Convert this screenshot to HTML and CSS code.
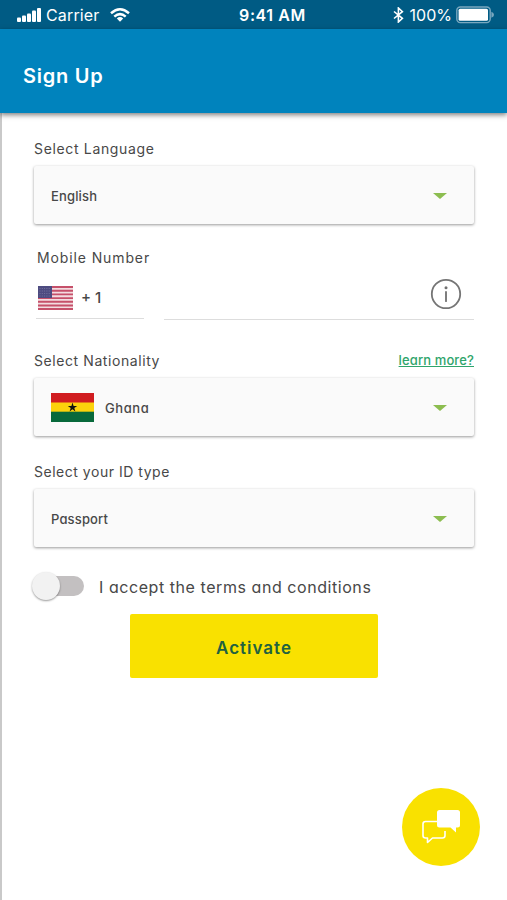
FILE: index.html
```html
<!DOCTYPE html>
<html lang="en">
<head>
<meta charset="utf-8">
<title>Sign Up</title>
<link rel="stylesheet" href="styles.css">
</head>
<body>
<div class="status">
  <div class="status-side">
    <svg class="signal" width="25" height="16" viewBox="0 0 25 16" fill="#fff"><rect x="0" y="10.5" width="4" height="4.5" rx="1"/><rect x="5" y="8.5" width="4" height="6.5" rx="1"/><rect x="10" y="6.5" width="4" height="8.5" rx="1"/><rect x="15" y="3.5" width="4" height="11.5" rx="1"/><rect x="20" y="1" width="4" height="14" rx="1"/></svg>
    <span class="carrier">Carrier</span>
    <svg class="wifi" width="20" height="14" viewBox="0 0 20 14" fill="none" stroke="#fff" stroke-width="2.5"><path d="M1 5.2Q10-2.6 19 5.2M4.3 8.6Q10 3.6 15.7 8.6"/><path d="M6.8 10.4Q10 7.8 13.2 10.4L10 13.7Z" fill="#fff" stroke="none"/></svg>
  </div>
  <span class="clock">9:41 AM</span>
  <div class="status-side status-end">
    <svg class="bluetooth" width="11" height="16" viewBox="0 0 11 16" fill="none" stroke="#fff" stroke-width="1.6"><path d="M1 4.5L9.4 11.4L5.4 15V1L9.4 4.6L1 11.5"/></svg>
    <span class="percent">100%</span>
    <svg class="battery" width="38" height="18" viewBox="0 0 38 18"><rect x=".8" y="1" width="33.4" height="15.6" rx="3.5" fill="none" stroke="#79a8bf" stroke-width="1.4"/><rect x="2.6" y="2.8" width="29.4" height="12" rx="1.5" fill="#fff"/><path d="M35.4 5.8Q38 7 38 8.8T35.4 11.8Z" fill="#79a8bf"/></svg>
  </div>
</div>
<header class="header"><h1 class="title">Sign Up</h1></header>
<main class="page">
  <section class="field">
    <div class="label-row"><span class="label label-language">Select Language</span></div>
    <div class="select"><span class="value english">English</span><i class="caret"></i></div>
  </section>
  <section class="field field-phone">
    <div class="label-row"><span class="label label-mobile">Mobile Number</span></div>
    <div class="phone">
      <div class="code">
        <svg width="35" height="24" viewBox="0 0 35 24"><rect width="35" height="24" fill="#f3dce0"/><path d="M0 1H35M0 4.7H35M0 8.4H35M0 12.1H35M0 15.8H35M0 19.5H35M0 23H35" stroke="#c6506a" stroke-width="1.9"/><rect width="14" height="12" fill="#4d4b80"/><path d="M1.5 2.5H13M1.5 5H13M1.5 7.5H13M1.5 10H13" stroke="#8583ab" stroke-width=".7" stroke-dasharray="1 1.3"/></svg>
        <span class="dial">+ 1</span>
      </div>
      <div class="number">
        <svg width="32" height="32" viewBox="0 0 32 32"><circle cx="16" cy="16" r="14.2" fill="none" stroke="#757575" stroke-width="1.8"/><circle cx="16" cy="9.7" r="1.5" fill="#707070"/><path d="M16 14V23.2" stroke="#707070" stroke-width="1.8" stroke-linecap="round"/></svg>
      </div>
    </div>
  </section>
  <section class="field field-nation">
    <div class="label-row"><span class="label label-nation">Select Nationality</span><a class="more">learn more?</a></div>
    <div class="select">
      <svg class="ghana-flag" width="43" height="29" viewBox="0 0 43 29"><rect width="43" height="10" fill="#d01c20"/><rect y="9.5" width="43" height="9.5" fill="#fcd20c"/><rect y="18.7" width="43" height="10.3" fill="#08693b"/><path d="M21.5 9.5L22.6 12.9H26.2L23.3 15L24.4 18.4L21.5 16.3L18.6 18.4L19.7 15L16.8 12.9H20.4Z" fill="#111"/></svg>
      <span class="value ghana">Ghana</span><i class="caret"></i>
    </div>
  </section>
  <section class="field">
    <div class="label-row"><span class="label label-id">Select your ID type</span></div>
    <div class="select"><span class="value passport">Passport</span><i class="caret"></i></div>
  </section>
  <div class="terms"><span class="toggle"><i class="knob"></i></span><span class="terms-text">I accept the terms and conditions</span></div>
  <button class="activate">Activate</button>
  <div class="chat">
    <svg width="40" height="36" viewBox="0 0 40 36"><path d="M16 12.5H4.5Q2 12.5 2 15V26.5Q2 29 4.5 29H6.5V33.5L11.5 29H21.5Q24 29 24 26.5V22" fill="none" stroke="#fff" stroke-width="1.6" stroke-linejoin="round"/><path d="M18.5 1H36.5Q39 1 39 3.5V16Q39 18.5 36.5 18.5H35V23.5L29.5 18.5H18.5Q16 18.5 16 16V3.5Q16 1 18.5 1Z" fill="#fff"/></svg>
  </div>
</main>
</body>
</html>
```
FILE: styles.css
```css
* { box-sizing: border-box; }
body {
  margin: 0;
  height: 900px;
  display: flex;
  flex-direction: column;
  overflow: hidden;
  background: #fff;
  color: #484848;
  font-family: Inter, "Liberation Sans", sans-serif;
  white-space: nowrap;
}
svg { display: block; flex: none; }
.status {
  height: 29px;
  flex: none;
  display: grid;
  grid-template-columns: 1fr auto 1fr;
  align-items: center;
  padding: 0 13px 0 17px;
  background: #005b84;
  color: #fff;
}
.status-side { display: flex; align-items: center; }
.status-end { justify-content: flex-end; }
.carrier { margin-left: 4px; width: 54px; font-size: 16px; letter-spacing: .15px; }
.wifi { margin-left: 10px; }
.clock { margin-left: 34px; font-size: 16px; font-weight: 600; letter-spacing: .6px; }
.percent { margin: 0 4px 0 6px; font-size: 16px; }
.header {
  height: 84px;
  flex: none;
  display: flex;
  align-items: center;
  padding: 9px 23px 0;
  background: #0083bd;
  box-shadow: 0 2px 5px rgba(0, 0, 0, .5);
  z-index: 1;
}
.title { margin: 0; color: #fff; font-size: 20px; font-weight: 600; letter-spacing: .75px; }
.page {
  flex: 1;
  display: flex;
  flex-direction: column;
  padding: 25px 33px 0 32px;
  border-left: 2px solid #c9c9c9;
}
.field { margin-bottom: 22px; }
.label-row {
  display: flex;
  align-items: center;
  justify-content: space-between;
  height: 20px;
  margin-bottom: 8px;
}
.label { font-size: 14px; font-weight: 400; letter-spacing: .66px; }
.label-mobile { letter-spacing: .88px; }
.label-nation { letter-spacing: .58px; }
.label-id { letter-spacing: .52px; }
.select {
  display: flex;
  align-items: center;
  height: 58px;
  padding: 2px 27px 0 17px;
  background: #fafafa;
  border-radius: 2px;
  box-shadow: 0 1px 3px rgba(0, 0, 0, .4);
}
.value { font-size: 13px; font-weight: 500; letter-spacing: .15px; font-feature-settings: "cv11"; }
.ghana { letter-spacing: .6px; }
.ghana-flag { margin: -2px 11px 0 0; }
.caret {
  margin-left: auto;
  border: 7px solid transparent;
  border-top: 6px solid #8cbd50;
  border-bottom: 0;
}
.field-phone { margin-bottom: 30px; }
.field-phone .label-row { height: 22px; padding-left: 3px; margin-bottom: 0; }
.phone { display: flex; gap: 20px; height: 52px; padding-left: 2px; }
.field-nation { margin-bottom: 25px; }
.code {
  display: flex;
  align-items: center;
  gap: 8px;
  width: 108px;
  height: 51px;
  padding: 9px 0 0 2px;
  border-bottom: 1px solid #ddd;
}
.dial { font-size: 15px; font-weight: 500; }
.number {
  flex: 1;
  display: flex;
  align-items: center;
  justify-content: flex-end;
  padding: 1px 12px 0 0;
  border-bottom: 1px solid #ddd;
}
.more {
  color: #2fa56b;
  font-size: 13px;
  font-weight: 500;
  letter-spacing: .12px;
  text-decoration: underline;
  font-feature-settings: "cv11";
}
.terms {
  display: flex;
  align-items: center;
  height: 34px;
  margin-bottom: 11px;
}
.toggle {
  display: flex;
  align-items: center;
  width: 45px;
  height: 20px;
  margin-left: 5px;
  border-radius: 10px;
  background: #c3c0c1;
}
.knob {
  width: 28px;
  height: 28px;
  margin-left: -7px;
  border-radius: 50%;
  background: #f2f2f2;
  box-shadow: 0 1px 2px rgba(0, 0, 0, .4);
  flex: none;
}
.terms-text { margin: 2px 0 0 15px; font-size: 16px; letter-spacing: .56px; font-feature-settings: "cv11"; }
.activate {
  width: 248px;
  height: 64px;
  margin-left: 96px;
  padding: 3px 0 0;
  border: 0;
  border-radius: 2px;
  background: #f9e100;
  color: #22613f;
  font: 600 17px Inter, sans-serif;
  letter-spacing: 1px;
}
.chat {
  display: flex;
  align-items: center;
  justify-content: center;
  align-self: flex-end;
  width: 78px;
  height: 78px;
  margin: auto -6px 34px 0;
  border-radius: 50%;
  background: #f9e100;
}
```
